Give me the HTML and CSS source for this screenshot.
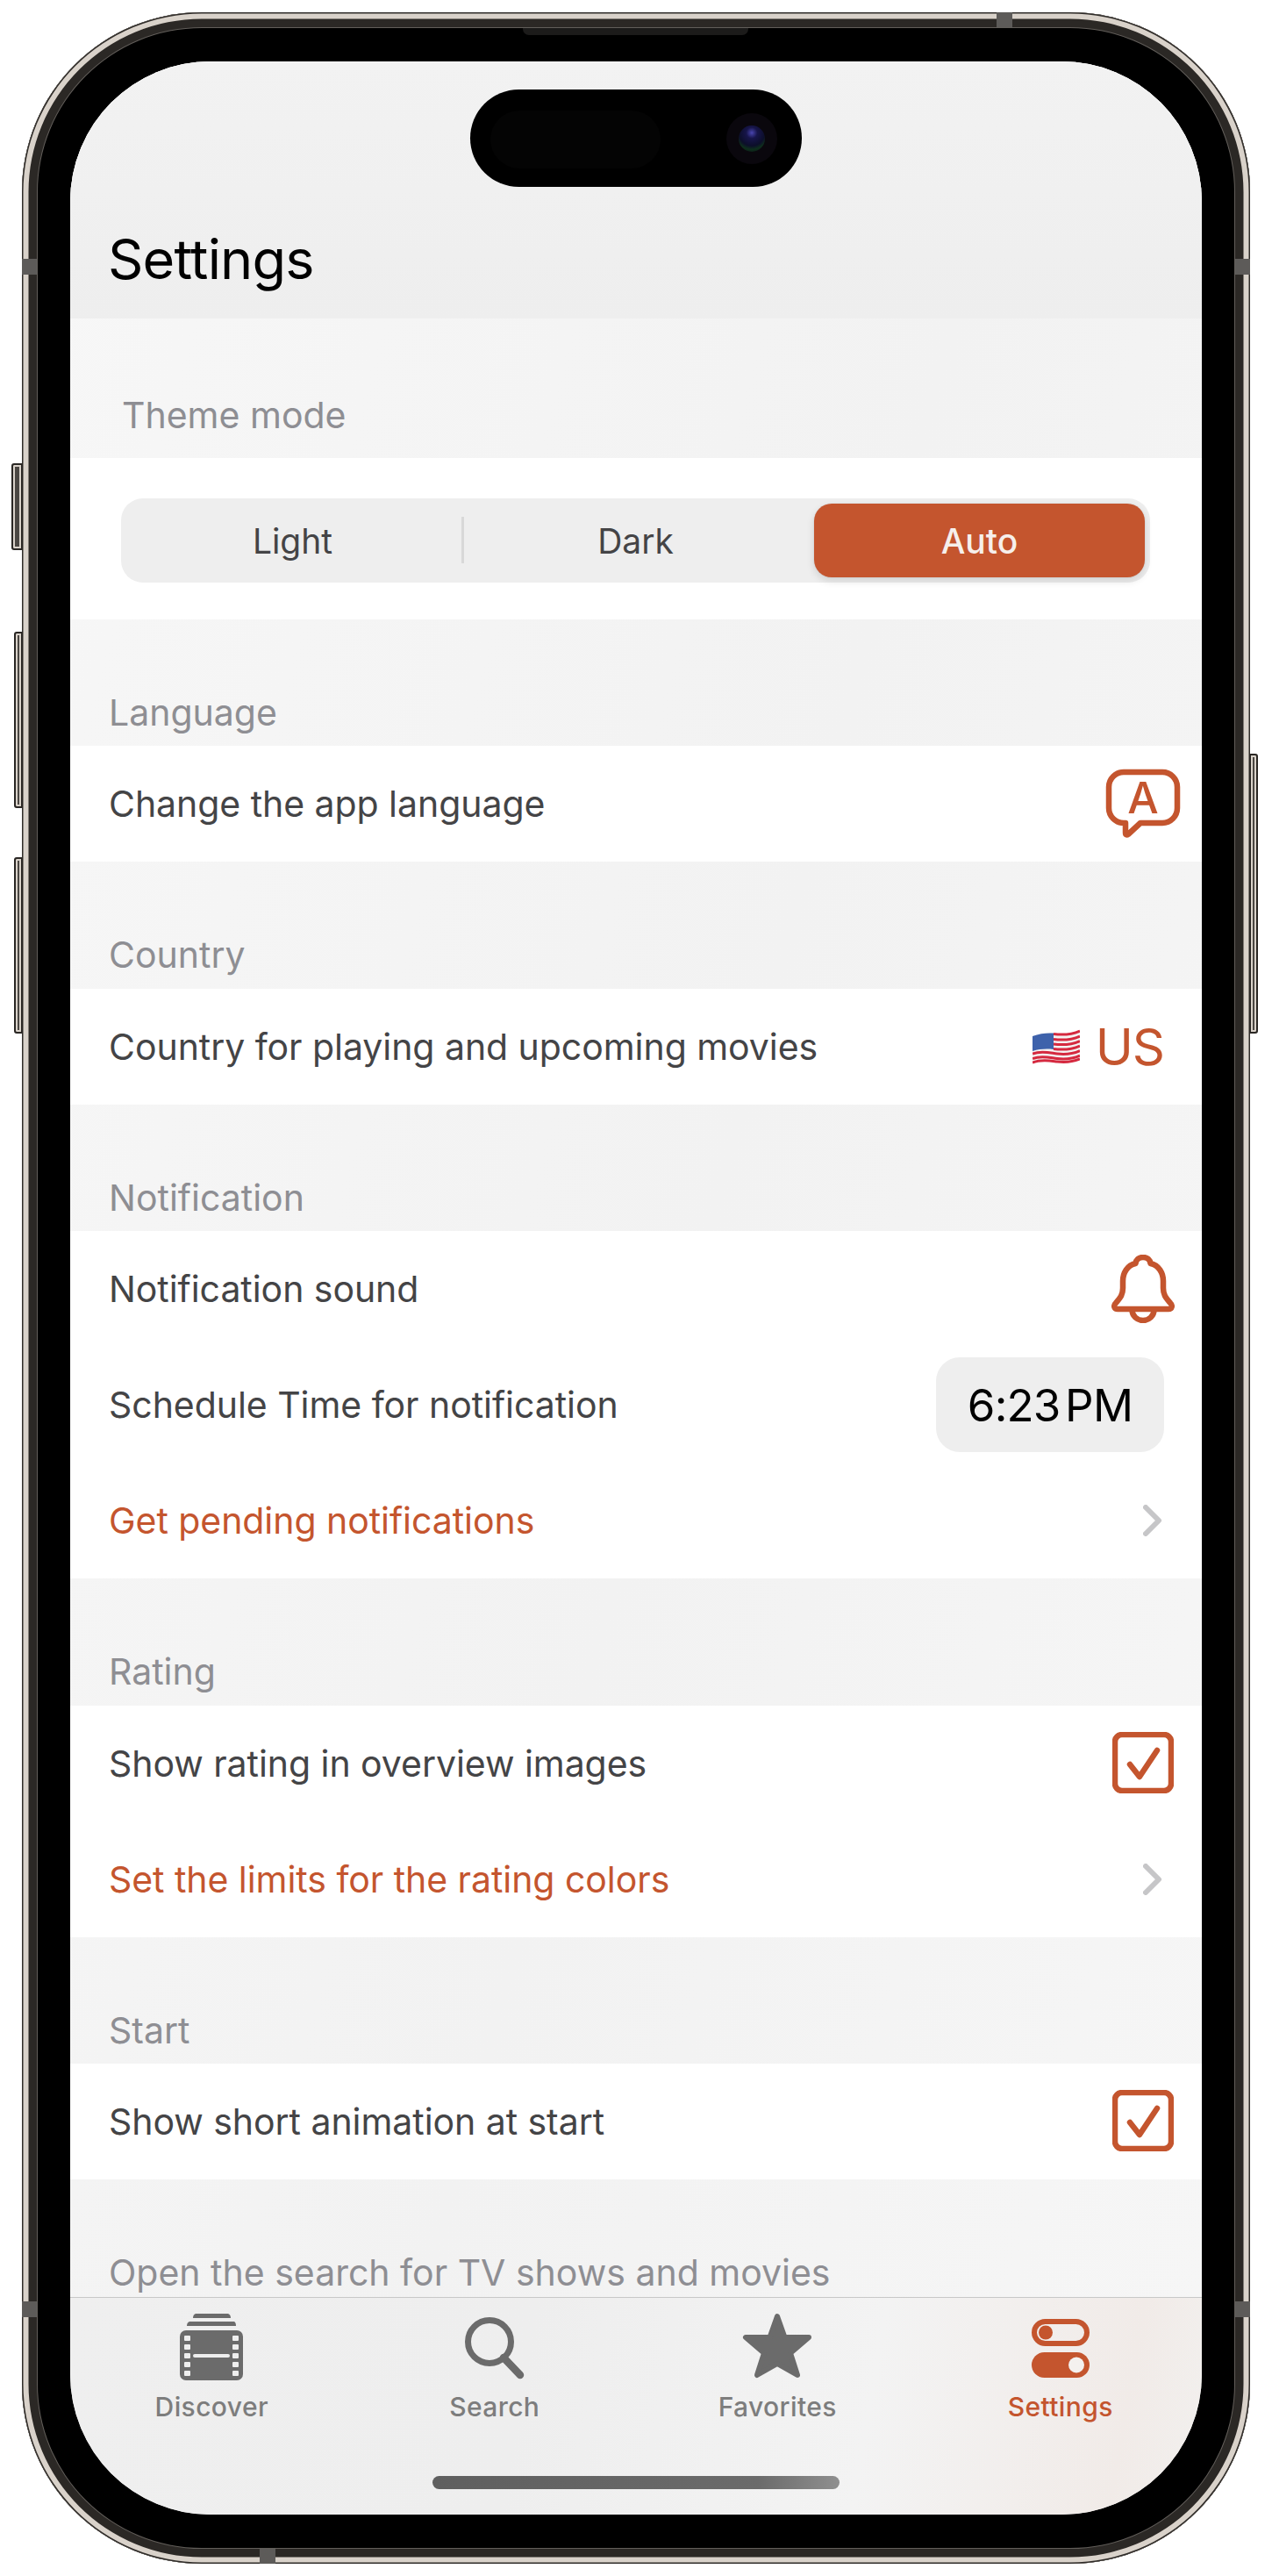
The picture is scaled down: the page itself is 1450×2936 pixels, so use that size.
FILE: index.html
```html
<!DOCTYPE html>
<html lang="en">
<head>
<meta charset="utf-8">
<title>Settings</title>
<link rel="stylesheet" href="styles.css">
</head>
<body>
<div class="phone">
  <span class="hw btn-action"></span>
  <span class="hw btn-vol-up"></span>
  <span class="hw btn-vol-down"></span>
  <span class="hw btn-power"></span>
  <span class="band band-lt"></span>
  <span class="band band-rt"></span>
  <span class="band band-lb"></span>
  <span class="band band-rb"></span>
  <span class="band-h band-top"></span>
  <span class="band-h band-bottom"></span>
  <span class="speaker"></span>
  <main class="screen">
    <div class="island">
      <span class="island-sensor"></span>
      <span class="island-cam"><span class="island-lens"></span></span>
    </div>
    <div class="scroll">
      <header class="nav"><h1 class="nav-title">Settings</h1></header>
      <div class="theme-label">Theme mode</div>
      <div class="theme-card">
        <div class="segment">
          <div class="seg-item seg-divided">Light</div>
          <div class="seg-item">Dark</div>
          <div class="seg-item seg-active">Auto</div>
        </div>
      </div>

      <div class="section-label">Language</div>
      <div class="row">
        <span>Change the app language</span>
        <svg class="ic-lang" viewBox="0 0 84 79"><path class="ic-stroke" d="M20 3H64a17 17 0 0 1 17 17V44a17 17 0 0 1-17 17H39L25.500 73.500Q22 76 22 72V61H20A17 17 0 0 1 3 44V20A17 17 0 0 1 20 3Z"/><text class="ic-lang-a" x="42" y="50" text-anchor="middle">A</text></svg>
      </div>

      <div class="section-label">Country</div>
      <div class="row">
        <span>Country for playing and upcoming movies</span>
        <span class="country">
          <svg class="ic-flag" viewBox="0 0 54 40">
            <path fill="#f4f2f2" d="M0 8C12 3 22 4 30 5S46 5 54 1V33C44 38 36 37 28 36S10 35 0 39Z"/>
            <path class="flag-red" d="M24 5.500C32 6.500 44 6.500 54 2"/>
            <path class="flag-red" d="M24 11.500C32 12.500 44 12.500 54 8"/>
            <path class="flag-red" d="M24 17C32 18 44 18 54 13.500"/>
            <path class="flag-red" d="M24 22.500C32 23.500 44 23.500 54 19"/>
            <path class="flag-red" d="M0 28C10 24 20 27 28 28S44 29 54 24.500"/>
            <path class="flag-red" d="M0 33.500C10 29.500 20 32.500 28 33.500S44 34.500 54 30"/>
            <path class="flag-red" d="M0 38C10 34 20 36 28 37S44 38 54 34"/>
            <path fill="#3e62ab" d="M0 8C8 5 16 4 24 4.500V23C16 22 8 22.500 0 25Z"/>
          </svg>
          <span class="country-code">US</span>
        </span>
      </div>

      <div class="section-label">Notification</div>
      <div class="row">
        <span>Notification sound</span>
        <svg class="ic-bell" viewBox="0 0 72 78"><path class="ic-stroke" d="M36 3C31 3 28 6 27.500 10C18 12 13 21 13 30V38C13 46 10 49 5 55C2 58 3 62 7 62H65C69 62 70 58 67 55C62 49 59 46 59 38V30C59 21 54 12 44.500 10C44 6 41 3 36 3ZM23.500 63A12.500 12 0 0 0 48.500 63"/></svg>
      </div>
      <div class="row">
        <span>Schedule Time for notification</span>
        <span class="time-pill">6:23 PM</span>
      </div>
      <div class="row">
        <span class="link">Get pending notifications</span>
        <svg class="ic-chevron" viewBox="0 0 22 36"><path d="M3 3L18 18L3 33"/></svg>
      </div>

      <div class="section-label">Rating</div>
      <div class="row">
        <span>Show rating in overview images</span>
        <svg class="ic-check" viewBox="0 0 70 70"><rect class="ic-stroke" x="3" y="3" width="64" height="64" rx="8"/><path class="ic-stroke" d="M20 37L31 51L51 21"/></svg>
      </div>
      <div class="row">
        <span class="link">Set the limits for the rating colors</span>
        <svg class="ic-chevron" viewBox="0 0 22 36"><path d="M3 3L18 18L3 33"/></svg>
      </div>

      <div class="section-label">Start</div>
      <div class="row">
        <span>Show short animation at start</span>
        <svg class="ic-check" viewBox="0 0 70 70"><rect class="ic-stroke" x="3" y="3" width="64" height="64" rx="8"/><path class="ic-stroke" d="M20 37L31 51L51 21"/></svg>
      </div>

      <div class="section-label">Open the search for TV shows and movies</div>
    </div>

    <footer class="tabbar">
      <nav class="tabs">
        <div class="tab">
          <svg class="tab-icon" width="72" height="76" viewBox="0 0 72 76">
            <path class="ic-gray" d="M18 0H55Q58 1 58 5H15Q15 1 18 0ZM11 9H62Q64 10 64 14H8Q8 10 11 9Z"/>
            <rect class="ic-gray" x="0" y="19" width="72" height="57" rx="7"/>
            <g class="ic-holes">
              <rect x="5" y="25" width="7" height="6" rx="1"/><rect x="5" y="35" width="7" height="6" rx="1"/><rect x="5" y="45" width="7" height="6" rx="1"/><rect x="5" y="55" width="7" height="6" rx="1"/><rect x="5" y="65" width="7" height="6" rx="1"/>
              <rect x="60" y="25" width="7" height="6" rx="1"/><rect x="60" y="35" width="7" height="6" rx="1"/><rect x="60" y="45" width="7" height="6" rx="1"/><rect x="60" y="55" width="7" height="6" rx="1"/><rect x="60" y="65" width="7" height="6" rx="1"/>
              <rect x="15" y="46" width="42" height="4" rx="2"/>
            </g>
          </svg>
          <span class="tab-label">Discover</span>
        </div>
        <div class="tab">
          <svg class="tab-icon" width="68" height="76" viewBox="0 0 68 76">
            <circle class="ic-gray-line" cx="28" cy="32" r="24.500"/>
            <path class="ic-gray-handle" d="M44 50L63 70"/>
          </svg>
          <span class="tab-label">Search</span>
        </div>
        <div class="tab">
          <svg class="tab-icon" width="78" height="76" viewBox="0 0 78 76">
            <path class="ic-star" d="M39 3L47.500 27H75L54 45L62 70L39 57L16 70L24 45L3 27H30.500Z"/>
          </svg>
          <span class="tab-label">Favorites</span>
        </div>
        <div class="tab tab-active">
          <svg class="tab-icon" width="66" height="76" viewBox="0 0 66 76">
            <rect class="ic-stroke-thin" x="3" y="9" width="60" height="25" rx="12.500"/>
            <circle class="ic-fill" cx="16" cy="21.500" r="8"/>
            <rect class="ic-fill" x="0" y="44" width="66" height="29" rx="14.500"/>
            <circle class="ic-knob" cx="51" cy="58.500" r="9"/>
          </svg>
          <span class="tab-label">Settings</span>
        </div>
      </nav>
      <div class="home-indicator"></div>
    </footer>
  </main>
</div>
</body>
</html>
```

FILE: styles.css
```css
* { box-sizing: border-box; }
html, body { margin: 0; padding: 0; background: #fff; }
body { width: 1450px; height: 2936px; padding: 14px 25px; overflow: hidden; font-family: Inter, "Noto Sans", sans-serif; }

.phone {
  position: relative;
  width: 1400px;
  height: 2908px;
  padding: 56px 55px 56px;
  border-radius: 205px;
  background: #000;
  box-shadow: inset 0 0 0 1.500px #2f2c29, inset 0 0 0 7.500px #d9d2ca, inset 0 0 0 17px #2b2825, inset 0 0 0 18px #625e5a;
}

/* hardware details overlaying the frame */
.hw { position: absolute; background: #4a4642; border: 2px solid #2a2724; box-shadow: inset 0 0 0 2px #d9d2ca; }
.btn-action { left: -12px; top: 514px; width: 13px; height: 99px; border-radius: 3px 0 0 3px; }
.btn-vol-up { left: -9px; top: 706px; width: 10px; height: 201px; border-radius: 3px 0 0 3px; }
.btn-vol-down { left: -9px; top: 963px; width: 10px; height: 201px; border-radius: 3px 0 0 3px; }
.btn-power { right: -9px; top: 845px; width: 10px; height: 319px; border-radius: 0 3px 3px 0; }
.band { position: absolute; width: 17px; height: 18px; background: #5d5b59; }
.band-lt { left: 0; top: 281px; }
.band-rt { right: 0; top: 281px; }
.band-lb { left: 0; top: 2609px; }
.band-rb { right: 0; top: 2609px; }
.band-h { position: absolute; width: 18px; height: 17px; background: #5d5b59; }
.band-top { left: 1111px; top: 0; }
.band-bottom { left: 271px; bottom: 0; }
.speaker { position: absolute; left: 571px; top: 18px; width: 257px; height: 8px; border-radius: 0 0 7px 7px; background: #1c1b1a; }

.screen {
  position: relative;
  display: flex;
  flex-direction: column;
  width: 1290px;
  height: 2796px;
  border-radius: 160px;
  overflow: hidden;
  background: #f1f1f1;
}
.island {
  position: absolute;
  left: 456px;
  top: 32px;
  width: 378px;
  height: 111px;
  border-radius: 56px;
  background: #000;
}
.island-sensor { position: absolute; left: 23px; top: 24px; width: 194px; height: 66px; border-radius: 33px; background: #040404; }
.island-cam { position: absolute; left: 292px; top: 27px; width: 58px; height: 58px; border-radius: 50%; background: #0a070d; display: flex; align-items: center; justify-content: center; }
.island-lens { width: 30px; height: 30px; border-radius: 50%; background: radial-gradient(circle at 50% 28%, #4a46b0 0, #17154a 24%, #0c0e2a 56%, #0e2f1c 72%, #070812 100%); }

.scroll {
  flex: 1;
  min-height: 0;
  overflow: hidden;
  background: linear-gradient(105deg, #f7f7f7, #f2f2f2 55%, #f6f6f6);
}
.nav {
  height: 292.500px;
  padding: 185px 0 0 43px;
  background: linear-gradient(180deg, #f2f2f2, #eeeeee);
}
.nav-title { margin: 0; font-size: 63px; line-height: 80px; font-weight: 400; color: #000; letter-spacing: -.8px; }
.theme-label { height: 159.500px; padding: 84px 0 0 59px; font-size: 41px; line-height: 52px; color: #8e8e93; }
.theme-card { height: 184px; padding: 46px 59px 0 58px; background: #fff; }
.segment { display: grid; grid-template-columns: repeat(3, 1fr); height: 96px; border-radius: 25px; background: #eeeeee; }
.seg-item { position: relative; display: flex; align-items: center; justify-content: center; font-size: 39px; color: #444446; }
.seg-divided::after { content: ""; position: absolute; right: 0; top: 21px; width: 3px; height: 53px; background: #d8d8d8; }
.seg-active { margin: 6px 6px 6px 8px; border-radius: 20px; background: #c4552e; color: #f6efeb; font-weight: 500; box-shadow: 0 0 0 1px rgba(0,0,0,.03), 0 4px 10px rgba(0,0,0,.12); }

.section-label { height: 144.400px; padding-top: 80px; padding-left: 44px; font-size: 41px; line-height: 52px; color: #8e8e93; white-space: nowrap; }
.row {
  display: flex;
  align-items: center;
  justify-content: space-between;
  height: 132px;
  padding: 0 43px 0 44px;
  background: #fff;
  font-size: 41px;
  letter-spacing: -.05px;
  color: #444446;
}
.link { color: #c4552e; }
.country { display: flex; align-items: center; gap: 18px; }
.country-code { font-size: 58px; line-height: 70px; color: #c4552e; letter-spacing: -1px; }
.time-pill { display: flex; align-items: center; justify-content: center; width: 260px; height: 108px; border-radius: 27px; background: #eeeeee; font-size: 51px; color: #000; word-spacing: -8px; letter-spacing: -.8px; }

.ic-stroke { fill: none; stroke: #c4552e; stroke-width: 6.500; stroke-linecap: round; stroke-linejoin: round; }
.ic-lang { width: 84px; height: 79px; margin-right: -18px; overflow: visible; }
.ic-lang-a { font-size: 50px; font-weight: 500; fill: #c4552e; }
.ic-flag { width: 54px; height: 40px; }
.flag-red { fill: none; stroke: #d5293f; stroke-width: 3; }
.ic-bell { width: 72px; height: 78px; margin-right: -12px; }
.ic-chevron { width: 22px; height: 36px; margin-right: 2px; }
.ic-chevron path { fill: none; stroke: #c6c6c8; stroke-width: 6; stroke-linecap: round; stroke-linejoin: round; }
.ic-check { width: 70px; height: 70px; margin: -2px -11px 0 0; }

.tabbar {
  display: flex;
  flex-direction: column;
  height: 248px;
  border-top: 1px solid #c8c8c8;
  background: linear-gradient(100deg, #efefef, #eeeeee 40%, #f3f3f3 70%, #f1ebe8 92%, #f2f0ee);
}
.tabs { display: grid; grid-template-columns: repeat(4, 1fr); padding-top: 18px; }
.tab { display: flex; flex-direction: column; align-items: center; }
.tab-icon { display: block; overflow: visible; }
.tab-label { margin-top: 11px; font-size: 30px; line-height: 38px; font-weight: 500; color: #7d7d7d; letter-spacing: .4px; }
.tab-active .tab-label { color: #c4552e; }
.ic-gray { fill: #6b6b6b; }
.ic-holes { fill: #eeeeee; }
.ic-gray-line { fill: none; stroke: #6b6b6b; stroke-width: 7; }
.ic-gray-handle { fill: none; stroke: #6b6b6b; stroke-width: 8.500; stroke-linecap: round; }
.ic-star { fill: #6b6b6b; stroke: #6b6b6b; stroke-width: 6; stroke-linejoin: round; }
.ic-stroke-thin { fill: none; stroke: #c4552e; stroke-width: 6; }
.ic-fill { fill: #c4552e; }
.ic-knob { fill: #f4f1ef; }
.home-indicator { align-self: center; width: 464px; height: 15px; margin-top: 60px; border-radius: 8px; background: linear-gradient(90deg, #5f5f5f, #6b6b6b 80%, #8f8f8f); }
```
